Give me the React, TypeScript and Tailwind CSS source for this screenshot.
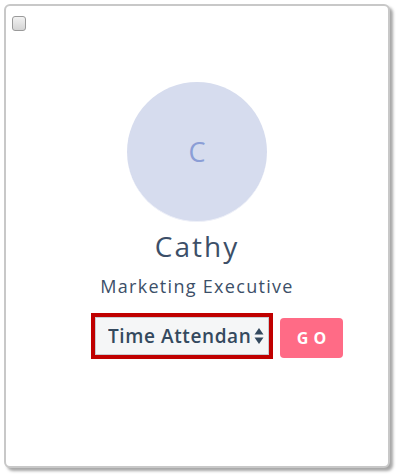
export default function App() {
  return (
    <div className="w-[402px] h-[474px] bg-white p-[4px] pr-[12px] pb-[6px]" style={{ fontFamily: '"Open Sans", "Liberation Sans", sans-serif' }}>
      <div className="relative h-full rounded-[6px] border-2 border-[#c8c8c8] bg-white shadow-[3px_3px_3px_rgba(0,0,0,0.35)] flex flex-col items-center pt-[76px]">
        <div className="absolute left-[6px] top-[10px] w-[14px] h-[15px] rounded-[3px] border border-[#9a9a9a] bg-gradient-to-b from-[#f2f2f2] to-[#d4d4d4]" />
        <div className="w-[140px] h-[140px] rounded-full bg-[#d6dcee] border-b border-[#eef0f8] flex items-center justify-center">
          <span className="text-[27px] text-[#8b9ed6] leading-none">C</span>
        </div>
        <div className="mt-[6px] text-[28px] leading-[36px] text-[#3c4f68] tracking-[2px]">Cathy</div>
        <div className="mt-[10px] text-[18px] leading-[24px] text-[#3c4f68] tracking-[1.3px]">Marketing Executive</div>
        <div className="mt-[15px] flex items-center gap-[7px] ml-[40px]">
          <div className="border-[4px] border-[#c00000] p-0">
            <div className="w-[174px] h-[38px] bg-[#f5f6f7] border border-[#c9ccd1] flex items-center pl-[12px] pr-[4px]">
              <span className="flex-1 overflow-hidden whitespace-nowrap text-[19px] font-semibold text-[#34495e] tracking-[0.6px]">Time Attendance</span>
              <svg width="10" height="18" viewBox="0 0 10 18" className="ml-[2px]">
                <path d="M5 1 L9.5 7.5 H0.5 Z" fill="#34495e" />
                <path d="M5 17 L9.5 10.5 H0.5 Z" fill="#34495e" />
              </svg>
            </div>
          </div>
          <button className="mt-[4px] w-[63px] h-[40px] rounded-[4px] bg-[#ff6b86] text-white text-[16px] font-bold tracking-[5px] pl-[5px]">GO</button>
        </div>
      </div>
    </div>
  );
}
